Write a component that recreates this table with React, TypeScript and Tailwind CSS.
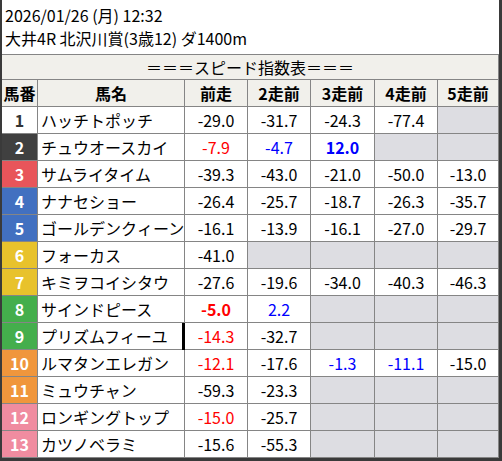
import React from "react";

type Val = { v: string; c?: "red" | "blue"; b?: boolean } | null;

type Horse = {
  no: number;
  name: string;
  bg: string;
  fg: string;
  vals: Val[];
};

const horses: Horse[] = [
  { no: 1, name: "ハッチトポッチ", bg: "bg-white", fg: "text-[#333]", vals: [{ v: "-29.0" }, { v: "-31.7" }, { v: "-24.3" }, { v: "-77.4" }, null] },
  { no: 2, name: "チュウオースカイ", bg: "bg-[#404040]", fg: "text-white", vals: [{ v: "-7.9", c: "red" }, { v: "-4.7", c: "blue" }, { v: "12.0", c: "blue", b: true }, null, null] },
  { no: 3, name: "サムライタイム", bg: "bg-[#e8555a]", fg: "text-white", vals: [{ v: "-39.3" }, { v: "-43.0" }, { v: "-21.0" }, { v: "-50.0" }, { v: "-13.0" }] },
  { no: 4, name: "ナナセショー", bg: "bg-[#4270c0]", fg: "text-white", vals: [{ v: "-26.4" }, { v: "-25.7" }, { v: "-18.7" }, { v: "-26.3" }, { v: "-35.7" }] },
  { no: 5, name: "ゴールデンクィーン", bg: "bg-[#4270c0]", fg: "text-white", vals: [{ v: "-16.1" }, { v: "-13.9" }, { v: "-16.1" }, { v: "-27.0" }, { v: "-29.7" }] },
  { no: 6, name: "フォーカス", bg: "bg-[#e8c22c]", fg: "text-white", vals: [{ v: "-41.0" }, null, null, null, null] },
  { no: 7, name: "キミヲコイシタウ", bg: "bg-[#e8c22c]", fg: "text-white", vals: [{ v: "-27.6" }, { v: "-19.6" }, { v: "-34.0" }, { v: "-40.3" }, { v: "-46.3" }] },
  { no: 8, name: "サインドピース", bg: "bg-[#44ae4c]", fg: "text-white", vals: [{ v: "-5.0", c: "red", b: true }, { v: "2.2", c: "blue" }, null, null, null] },
  { no: 9, name: "プリズムフィーユ", bg: "bg-[#44ae4c]", fg: "text-white", vals: [{ v: "-14.3", c: "red" }, { v: "-32.7" }, null, null, null] },
  { no: 10, name: "ルマタンエレガン", bg: "bg-[#f0963c]", fg: "text-white", vals: [{ v: "-12.1", c: "red" }, { v: "-17.6" }, { v: "-1.3", c: "blue" }, { v: "-11.1", c: "blue" }, { v: "-15.0" }] },
  { no: 11, name: "ミュウチャン", bg: "bg-[#f0963c]", fg: "text-white", vals: [{ v: "-59.3" }, { v: "-23.3" }, null, null, null] },
  { no: 12, name: "ロンギングトップ", bg: "bg-[#f08ca0]", fg: "text-white", vals: [{ v: "-15.0", c: "red" }, { v: "-25.7" }, null, null, null] },
  { no: 13, name: "カツノベラミ", bg: "bg-[#f08ca0]", fg: "text-white", vals: [{ v: "-15.6" }, { v: "-55.3" }, null, null, null] },
];

const valW = ["w-[63px]", "w-[63px]", "w-[64px]", "w-[63px]", "w-[61px]"];
const heads = ["前走", "2走前", "3走前", "4走前", "5走前"];

const cell = "border-r border-b border-[#858585] flex items-center";

const App = () => {
  return (
    <div
      className="w-[502px] h-[461px] bg-white border-l-2 border-r-[3px] border-b-[3px] border-[#3a3a3a] text-[16px] text-black overflow-hidden"
      style={{ fontFamily: '"Noto Sans CJK JP", "Noto Sans", sans-serif' }}
    >
      <div className="h-[55px] border-b border-[#858585] pl-[3px] pt-[4px] leading-[23px]">
        <div>2026/01/26 (月) 12:32</div>
        <div>大井4R 北沢川賞(3歳12) ダ1400m</div>
      </div>
      <div className="h-[25px] bg-[#f1f0eb] border-b border-r border-[#858585] flex items-center justify-center">
        ＝＝＝スピード指数表＝＝＝
      </div>
      {/* header row */}
      <div className="flex h-[27px] bg-[#f1f0eb] font-bold">
        <div className={`${cell} w-[36px] justify-center`}>馬番</div>
        <div className={`${cell} w-[147px] justify-center`}>馬名</div>
        {heads.map((h, i) => (
          <div key={h} className={`${cell} ${valW[i]} justify-center`}>
            {h}
          </div>
        ))}
      </div>
      {horses.map((h) => (
        <div key={h.no} className="flex h-[27px]">
          <div className={`${cell} w-[36px] justify-center font-bold ${h.bg} ${h.fg}`}>{h.no}</div>
          <div className={`${cell} w-[147px] pl-[3px] whitespace-nowrap overflow-hidden`}>{h.name}</div>
          {h.vals.map((v, i) => (
            <div
              key={i}
              className={`${cell} relative ${valW[i]} justify-center ${v ? "bg-white" : "bg-[#dddde2]"} ${
                v?.c === "red" ? "text-[#ff0000]" : v?.c === "blue" ? "text-[#0000ff]" : ""
              } ${v?.b ? "font-bold" : ""}`}
            >
              {/* text cursor bar seen in the capture */}
              {h.no === 9 && i === 0 && (
                <span className="absolute left-[-3px] top-0 h-[27px] w-[3px] bg-black" />
              )}
              {v?.v}
            </div>
          ))}
        </div>
      ))}
    </div>
  );
};

export default App;
